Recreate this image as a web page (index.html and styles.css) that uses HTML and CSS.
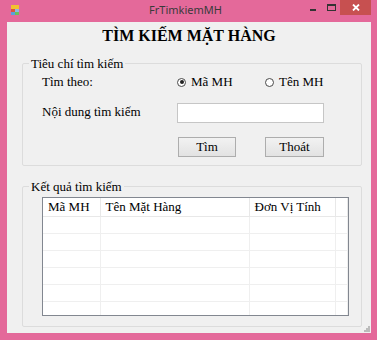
FILE: index.html
```html
<!DOCTYPE html>
<html lang="vi">

<head>
    <meta charset="UTF-8">
    <meta name="viewport" content="width=device-width, initial-scale=1.0">
    <link rel="stylesheet" href="styles.css">
</head>

<body>

    <div class="window">
        <div class="titlebar">
            <svg class="app-icon" width="8" height="10" viewBox="0 0 8 10">
                <rect x="0" y="0" width="8" height="4" fill="#f2c230"/>
                <rect x="0" y="4" width="4" height="3" fill="#e0553a"/>
                <rect x="4" y="4" width="4" height="3" fill="#8fb8e0"/>
                <rect x="0" y="7" width="4" height="3" fill="#5aa0dc"/>
                <rect x="4" y="7" width="4" height="3" fill="#6dbf5a"/>
            </svg>
            <span class="title">FrTimkiemMH</span>
            <div class="caption-btns">
                <span class="cb min">
                    <svg width="6" height="2" viewBox="0 0 6 2"><rect width="6" height="2" fill="#333"/></svg>
                </span>
                <span class="cb max">
                    <svg width="9" height="7" viewBox="0 0 9 7"><rect x="0.5" y="0.5" width="8" height="6" fill="none" stroke="#333"/><rect x="0" y="0" width="9" height="2" fill="#333"/></svg>
                </span>
                <span class="cb close">
                    <svg width="8" height="7" viewBox="0 0 8 7"><path d="M1 0.5 L7 6.5 M7 0.5 L1 6.5" stroke="#fff" stroke-width="1.8"/></svg>
                </span>
            </div>
        </div>

        <div class="client">
            <h1>TÌM KIẾM MẶT HÀNG</h1>

            <fieldset class="group">
                <legend>Tiêu chí tìm kiếm</legend>
                <div class="row first">
                    <span class="lbl">Tìm theo:</span>
                    <label class="radio checked"><span class="dot"></span>Mã MH</label>
                    <label class="radio"><span class="dot"></span>Tên MH</label>
                </div>
                <div class="row">
                    <span class="lbl">Nội dung tìm kiếm</span>
                    <input class="textbox" type="text">
                </div>
                <div class="row buttons">
                    <span class="lbl"></span>
                    <button class="btn">Tìm</button>
                    <button class="btn exit">Thoát</button>
                </div>
            </fieldset>

            <fieldset class="group results">
                <legend>Kết quả tìm kiếm</legend>
                <div class="grid">
                    <table>
                        <colgroup>
                            <col style="width:57px">
                            <col style="width:149px">
                            <col style="width:86px">
                            <col>
                        </colgroup>
                        <thead>
                            <tr><th>Mã MH</th><th>Tên Mặt Hàng</th><th>Đơn Vị Tính</th><th></th></tr>
                        </thead>
                        <tbody>
                            <tr><td></td><td></td><td></td><td></td></tr>
                            <tr><td></td><td></td><td></td><td></td></tr>
                            <tr><td></td><td></td><td></td><td></td></tr>
                            <tr><td></td><td></td><td></td><td></td></tr>
                            <tr><td></td><td></td><td></td><td></td></tr>
                            <tr><td></td><td></td><td></td><td></td></tr>
                        </tbody>
                    </table>
                </div>
            </fieldset>

            <svg class="grip" width="7" height="7" viewBox="0 0 7 7">
                <rect x="5" y="1" width="2" height="2" fill="#bbb"/>
                <rect x="3" y="3" width="2" height="2" fill="#bbb"/>
                <rect x="5" y="3" width="2" height="2" fill="#bbb"/>
                <rect x="1" y="5" width="2" height="2" fill="#bbb"/>
                <rect x="3" y="5" width="2" height="2" fill="#bbb"/>
                <rect x="5" y="5" width="2" height="2" fill="#bbb"/>
            </svg>
        </div>
    </div>

</body>

</html>
```

FILE: styles.css
```css
body {
    margin: 0;
    font-family: 'Liberation Serif', 'Times New Roman', serif;
    font-size: 13px;
    color: #000;
}

.window {
    width: 377px;
    height: 340px;
    box-sizing: border-box;
    background: #e4699a;
    padding: 0 6px 7px 7px;
    display: flex;
    flex-direction: column;
}

.titlebar {
    height: 22px;
    display: grid;
    grid-template-columns: 1fr auto 1fr;
    align-items: start;
    margin: 0 -6px 0 -7px;
    padding-right: 6px;
}

.app-icon {
    margin: 5px 0 0 11px;
}

.title {
    font-family: 'Noto Sans', sans-serif;
    font-size: 11px;
    line-height: 20px;
    color: #3a3a3a;
}

.caption-btns {
    display: flex;
    justify-content: flex-end;
}

.cb {
    display: flex;
    justify-content: center;
    height: 15px;
}

.cb.min {
    width: 18px;
    align-items: flex-start;
    padding-top: 9px;
    box-sizing: border-box;
}

.cb.max {
    width: 18px;
    padding-top: 4px;
    box-sizing: border-box;
}

.cb.close {
    width: 31px;
    background: #c75050;
    align-items: center;
}

.client {
    flex: 1;
    background: #f0f0f0;
    position: relative;
    display: flex;
    flex-direction: column;
}

h1 {
    margin: 0;
    padding-top: 4px;
    height: 20px;
    line-height: 20px;
    font-size: 16px;
    font-weight: bold;
    text-align: center;
}

.group {
    margin: 10px 9px 0 15px;
    padding: 0 0 8px 6px;
    border: 1px solid #dcdcdc;
    border-radius: 2px;
    min-width: 0;
}

.group legend {
    padding: 0 2px;
    font-size: 13px;
    line-height: 15px;
}

.row {
    display: flex;
    align-items: center;
    height: 20px;
    margin-top: 11px;
    padding-left: 13px;
}

.row.first {
    margin-top: 1px;
}

.row.buttons {
    margin-top: 14px;
}

.lbl {
    width: 135px;
    flex: none;
}

.row:nth-child(3) .lbl {
    margin-top: -3px;
}

.radio {
    display: flex;
    align-items: center;
    width: 88px;
}

.dot {
    width: 7px;
    height: 7px;
    border: 1px solid #4a4a4a;
    border-radius: 50%;
    background: #fff;
    margin-right: 5px;
    position: relative;
}

.radio.checked .dot::after {
    content: "";
    position: absolute;
    left: 1.5px;
    top: 1.5px;
    width: 4px;
    height: 4px;
    border-radius: 50%;
    background: #222;
}

.textbox {
    width: 147px;
    height: 20px;
    box-sizing: border-box;
    border: 1px solid #c6c6c6;
    background: #fff;
    margin: 0;
    padding: 0;
}

.btn {
    height: 20px;
    width: 58px;
    margin: 0 0 0 1px;
    padding: 0;
    border: 1px solid #adadad;
    background: linear-gradient(#f2f2f2, #e2e2e2);
    font-family: 'Liberation Serif', 'Times New Roman', serif;
    font-size: 13px;
    color: #000;
}

.btn.exit {
    width: 59px;
    margin-left: 29px;
}

.results {
    margin-top: 13px;
    padding-bottom: 10px;
}

.grid {
    margin: 3px 0 0 13px;
    width: 307px;
    height: 119px;
    box-sizing: border-box;
    border: 1px solid #828790;
    background: #fff;
    overflow: hidden;
}

.grid table {
    width: 305px;
    border-collapse: collapse;
    table-layout: fixed;
}

.grid th {
    height: 18px;
    padding: 0 0 0 5px;
    font-weight: normal;
    text-align: left;
    border-right: 1px solid #e8e8e8;
    border-bottom: 1px solid #e8e8e8;
    white-space: nowrap;
}

.grid td {
    height: 16px;
    padding: 0;
    border-right: 1px solid #efefef;
    border-bottom: 1px solid #efefef;
}

.grip {
    position: absolute;
    right: 1px;
    bottom: 1px;
}
```
